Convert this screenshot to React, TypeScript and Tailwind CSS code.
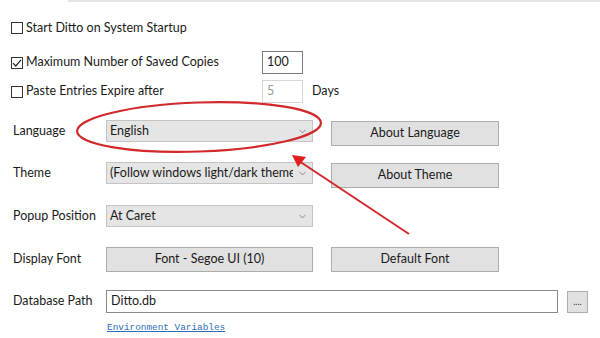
import { ChevronDown } from 'lucide-react'

const font = { fontFamily: 'Lato, "Noto Sans", sans-serif' }

function Checkbox({ checked }: { checked?: boolean }) {
  return (
    <div className="w-[12px] h-[12px] border border-[#333] bg-white flex items-center justify-center shrink-0">
      {checked && (
        <svg width="10" height="10" viewBox="0 0 10 10">
          <path d="M1 5.2 L3.8 8 L9 1.8" fill="none" stroke="#222" strokeWidth="1.2" />
        </svg>
      )}
    </div>
  )
}

function Select({ value }: { value: string }) {
  return (
    <div className="w-[207px] h-[22px] bg-[#e5e5e5] border border-[#c4c4c4] flex items-center pl-[3px] pr-[4px] shrink-0">
      <span className="flex-1 min-w-0 overflow-hidden whitespace-nowrap text-[12.5px] text-[#1a1a1a] leading-[20px]">{value}</span>
      <ChevronDown size={11} strokeWidth={1.3} className="text-[#555] ml-1 shrink-0" />
    </div>
  )
}

function Button({ label, w }: { label: string; w: string }) {
  return (
    <div className={`${w} h-[25px] bg-[#e1e1e1] border border-[#adadad] flex items-center justify-center text-[12.5px] text-[#1a1a1a] shrink-0`}>
      {label}
    </div>
  )
}

export default function App() {
  return (
    <div className="w-[600px] h-[338px] bg-white relative overflow-hidden text-[#1a1a1a] text-[12.5px]" style={font}>
      {/* tab strip edge */}
      <div className="ml-[68px] h-[2px] bg-[#e6e6e6]" />

      <div className="flex flex-col">
        {/* ── checkboxes ── */}
        <div className="flex items-center h-[14px] mt-[19px] pl-[11px] gap-[3px]">
          <Checkbox />
          <span className="leading-none">Start Ditto on System Startup</span>
        </div>

        <div className="flex items-center h-[23px] mt-[16px] pl-[11px]">
          <div className="flex items-center gap-[3px] w-[251px]">
            <Checkbox checked />
            <span className="leading-none">Maximum Number of Saved Copies</span>
          </div>
          <div className="w-[41px] h-[23px] border border-[#7a7a7a] flex items-center pl-[4px]">100</div>
        </div>

        <div className="flex items-center h-[23px] mt-[6px] pl-[11px]">
          <div className="flex items-center gap-[3px] w-[251px]">
            <Checkbox />
            <span className="leading-none">Paste Entries Expire after</span>
          </div>
          <div className="w-[41px] h-[23px] border border-[#d6d6d6] flex items-center pl-[4px] text-[#9a9a9a]">5</div>
          <span className="ml-[9px]">Days</span>
        </div>

        {/* ── Language ── */}
        <div className="flex items-start h-[26px] mt-[17px] pl-[13px]">
          <span className="w-[93px] h-[22px] flex items-center">Language</span>
          <Select value="English" />
          <div className="ml-[18px] mt-[1px]">
            <Button label="About Language" w="w-[168px]" />
          </div>
        </div>

        {/* ── Theme ── */}
        <div className="flex items-start h-[26px] mt-[16px] pl-[13px]">
          <span className="w-[93px] h-[22px] flex items-center">Theme</span>
          <Select value="(Follow windows light/dark themes)" />
          <div className="ml-[18px] mt-[1px]">
            <Button label="About Theme" w="w-[168px]" />
          </div>
        </div>

        {/* ── Popup Position ── */}
        <div className="flex items-start h-[22px] mt-[17px] pl-[13px]">
          <span className="w-[93px] h-[22px] flex items-center">Popup Position</span>
          <Select value="At Caret" />
        </div>

        {/* ── Display Font ── */}
        <div className="flex items-center h-[25px] mt-[20px] pl-[13px]">
          <span className="w-[93px]">Display Font</span>
          <Button label="Font - Segoe UI (10)" w="w-[207px]" />
          <div className="ml-[18px]">
            <Button label="Default Font" w="w-[168px]" />
          </div>
        </div>

        {/* ── Database Path ── */}
        <div className="flex items-center h-[23px] mt-[18px] pl-[13px]">
          <span className="w-[93px]">Database Path</span>
          <div className="w-[452px] h-[23px] border border-[#8a8a8a] flex items-center pl-[4px]">Ditto.db</div>
          <div className="ml-[9px] w-[21px] h-[22px] bg-[#e1e1e1] border border-[#adadad] flex items-center justify-center text-[9px] leading-none text-[#333]">
            ....
          </div>
        </div>

        <div className="pl-[107px] mt-[4px] h-[14px]">
          <span className="text-[9.4px] text-[#2f6cb5] underline leading-none" style={{ fontFamily: '"Liberation Mono", monospace' }}>
            Environment Variables
          </span>
        </div>
      </div>

      {/* ── annotation ── */}
      <svg className="absolute inset-0 pointer-events-none" width="600" height="338" viewBox="0 0 600 338">
        <ellipse cx="199" cy="127" rx="122" ry="24.5" fill="none" stroke="#d0282b" strokeWidth="2.2" transform="rotate(-2 199 127)" />
        <line x1="409" y1="234" x2="299" y2="161" stroke="#d0282b" strokeWidth="2" />
        <polygon points="292,155 306,157 298,167" fill="#e11d1d" />
      </svg>
    </div>
  )
}
